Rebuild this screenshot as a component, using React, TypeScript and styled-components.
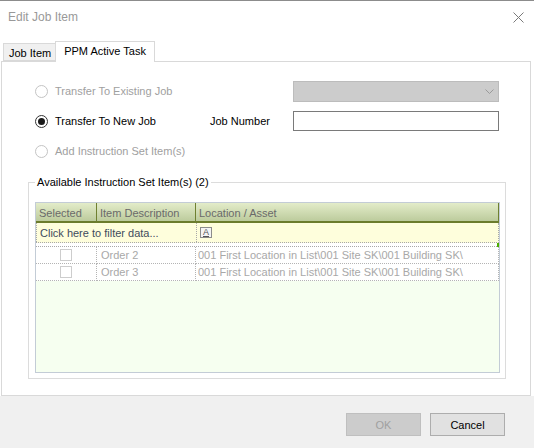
import React from "react";
import styled, { createGlobalStyle } from "styled-components";

const GlobalStyle = createGlobalStyle`
  html, body {
    margin: 0;
    padding: 0;
    background: #ffffff;
  }
  body {
    font-family: "Liberation Sans", Arial, sans-serif;
    font-size: 11px;
    color: #000000;
  }
`;

const Window = styled.div`
  width: 534px;
  height: 448px;
  box-sizing: border-box;
  border-top: 1px solid #8c8c8c;
  display: flex;
  flex-direction: column;
  background: #ffffff;
  overflow: hidden;
`;

const TitleBar = styled.div`
  height: 32px;
  display: flex;
  align-items: center;
  justify-content: space-between;
  padding: 0 10px 0 8px;
`;

const Title = styled.span`
  font-size: 12px;
  color: #999999;
`;

const CloseButton = styled.span`
  display: flex;
  width: 11px;
  height: 11px;
`;

const TabStrip = styled.div`
  height: 28px;
  display: flex;
  align-items: flex-end;
  padding-left: 3px;
`;

const Tab = styled.div<{ $active?: boolean }>`
  box-sizing: border-box;
  height: ${(p) => (p.$active ? "21px" : "18px")};
  padding: ${(p) => (p.$active ? "3px 8px 0 8px" : "3px 4px 0 5px")};
  margin-left: ${(p) => (p.$active ? "-1px" : "0")};
  margin-bottom: ${(p) => (p.$active ? "-1px" : "0")};
  position: relative;
  z-index: ${(p) => (p.$active ? 1 : 0)};
  border: 1px solid #d9d9d9;
  border-bottom: ${(p) => (p.$active ? "none" : "1px solid #d9d9d9")};
  background: ${(p) => (p.$active ? "#ffffff" : "#f0f0f0")};
  font-size: 11px;
  line-height: 13px;
  white-space: nowrap;
`;

const Panel = styled.div`
  box-sizing: border-box;
  margin-left: 1px;
  width: 530px;
  height: 335px;
  border: 1px solid #d9d9d9;
  background: #ffffff;
  display: flex;
  flex-direction: column;
`;

const Options = styled.div`
  display: grid;
  grid-template-columns: 175px 83px 206px;
  grid-auto-rows: 20px;
  row-gap: 10px;
  margin: 19px 0 0 33px;
  align-items: center;
`;

const RadioRow = styled.label<{ $disabled?: boolean }>`
  display: flex;
  align-items: center;
  gap: 7px;
  color: ${(p) => (p.$disabled ? "#a0a0a0" : "#000000")};
  white-space: nowrap;
`;

const RadioDot = styled.span<{ $checked?: boolean; $disabled?: boolean }>`
  box-sizing: border-box;
  width: 13px;
  height: 13px;
  border-radius: 50%;
  border: 1px solid ${(p) => (p.$disabled ? "#c4c4c4" : "#333333")};
  background: #ffffff;
  display: flex;
  align-items: center;
  justify-content: center;

  &::after {
    content: "";
    width: 7px;
    height: 7px;
    border-radius: 50%;
    background: ${(p) => (p.$checked ? "#1a1a1a" : "transparent")};
  }
`;

const FieldLabel = styled.span`
  color: #000000;
`;

const Combo = styled.div`
  box-sizing: border-box;
  height: 21px;
  border: 1px solid #bcbcbc;
  background: #cccccc;
  display: flex;
  align-items: center;
  justify-content: flex-end;
  padding-right: 4px;
`;

const TextBox = styled.input`
  box-sizing: border-box;
  height: 20px;
  width: 206px;
  margin: 0;
  border: 1px solid #7a7a7a;
  background: #ffffff;
  outline: none;
`;

const Group = styled.fieldset`
  box-sizing: border-box;
  margin: 15px 0 0 26px;
  width: 478px;
  height: 203px;
  padding: 0 5px 5px 6px;
  border: 1px solid #dcdcdc;
`;

const GroupTitle = styled.legend`
  padding: 0 2px;
  font-size: 11px;
  line-height: 13px;
  color: #000000;
`;

const Grid = styled.div`
  box-sizing: border-box;
  margin-top: 13px;
  height: 171px;
  border: 1px solid #c3ccd6;
  background: #f6fff0;
  display: flex;
  flex-direction: column;
`;

const GridRow = styled.div`
  display: grid;
  grid-template-columns: 61px 99px 1fr;
`;

const HeaderCell = styled.div`
  box-sizing: border-box;
  height: 20px;
  padding: 3px 0 0 3px;
  border-right: 1px solid #6f8030;
  border-bottom: 2px solid #6b7c2c;
  background: linear-gradient(#e3ecc9, #bccb9c);
  color: #6a6a6a;
  line-height: 14px;
  white-space: nowrap;
`;

const FilterRow = styled.div`
  display: grid;
  grid-template-columns: 160px 1fr;
  height: 19px;
  background: #fefedc;
  border-bottom: 1px dotted #a8a8a8;
  border-right: 1px dotted #a8a8a8;
`;

const FilterCell = styled.div`
  display: flex;
  align-items: center;
  padding-left: 3px;
  border-left: 1px dotted #a8a8a8;
  color: #3e4c5c;
  white-space: nowrap;
`;

const FilterIcon = styled.span`
  box-sizing: border-box;
  width: 12px;
  height: 11px;
  border: 1px solid #8c8c8c;
  background: #f4f4f4;
  font-size: 9px;
  line-height: 9px;
  text-align: center;
  text-decoration: underline;
  color: #555555;
`;

const Spacer = styled.div`
  height: 3px;
  background: #ffffff;
  border-bottom: 1px dotted #a8a8a8;
  display: flex;
  justify-content: flex-end;
`;

const Marker = styled.span`
  width: 2px;
  height: 4px;
  background: #4caf00;
`;

const Cell = styled.div<{ $center?: boolean; $pad?: number }>`
  box-sizing: border-box;
  height: 17px;
  display: flex;
  align-items: center;
  justify-content: ${(p) => (p.$center ? "center" : "flex-start")};
  padding-left: ${(p) => p.$pad ?? 0}px;
  background: #ffffff;
  border-right: 1px dotted #b4b4b4;
  border-bottom: 1px dotted #b4b4b4;
  color: #a8a8a8;
  white-space: nowrap;
  overflow: hidden;
`;

const CheckBox = styled.span`
  box-sizing: border-box;
  width: 12px;
  height: 12px;
  border: 1px solid #cdcdcd;
  background: #ffffff;
`;

const Footer = styled.div`
  flex: 1;
  background: #f0f0f0;
  display: flex;
  justify-content: flex-end;
  align-items: flex-start;
  gap: 9px;
  padding: 17px 29px 0 0;
`;

const Button = styled.button<{ $disabled?: boolean }>`
  box-sizing: border-box;
  width: 75px;
  height: 23px;
  margin: 0;
  padding: 0;
  font-family: "Liberation Sans", Arial, sans-serif;
  font-size: 11px;
  border: 1px solid ${(p) => (p.$disabled ? "#bfbfbf" : "#adadad")};
  background: ${(p) => (p.$disabled ? "#cccccc" : "#e1e1e1")};
  color: ${(p) => (p.$disabled ? "#a0a0a0" : "#000000")};
`;

const rows = [
  { name: "Order 2", location: "001 First Location in List\\001 Site SK\\001 Building SK\\" },
  { name: "Order 3", location: "001 First Location in List\\001 Site SK\\001 Building SK\\" },
];

export default function App() {
  return (
    <>
      <GlobalStyle />
      <Window>
        <TitleBar>
          <Title>Edit Job Item</Title>
          <CloseButton>
            <svg width="11" height="11" viewBox="0 0 11 11">
              <path d="M0.5 0.5 L10.5 10.5 M10.5 0.5 L0.5 10.5" stroke="#7a7a7a" strokeWidth="1" />
            </svg>
          </CloseButton>
        </TitleBar>

        <TabStrip>
          <Tab>Job Item</Tab>
          <Tab $active>PPM Active Task</Tab>
        </TabStrip>

        <Panel>
          <Options>
            <RadioRow $disabled>
              <RadioDot $disabled />
              Transfer To Existing Job
            </RadioRow>
            <span />
            <Combo>
              <svg width="9" height="5" viewBox="0 0 9 5">
                <polyline points="0.5,0.5 4.5,4.5 8.5,0.5" fill="none" stroke="#9a9a9a" strokeWidth="1" />
              </svg>
            </Combo>

            <RadioRow>
              <RadioDot $checked />
              Transfer To New Job
            </RadioRow>
            <FieldLabel>Job Number</FieldLabel>
            <TextBox />

            <RadioRow $disabled>
              <RadioDot $disabled />
              Add Instruction Set Item(s)
            </RadioRow>
          </Options>

          <Group>
            <GroupTitle>Available Instruction Set Item(s) (2)</GroupTitle>
            <Grid>
              <GridRow>
                <HeaderCell>Selected</HeaderCell>
                <HeaderCell>Item Description</HeaderCell>
                <HeaderCell>Location / Asset</HeaderCell>
              </GridRow>
              <FilterRow>
                <FilterCell>Click here to filter data...</FilterCell>
                <FilterCell>
                  <FilterIcon>A</FilterIcon>
                </FilterCell>
              </FilterRow>
              <Spacer>
                <Marker />
              </Spacer>
              {rows.map((r) => (
                <GridRow key={r.name}>
                  <Cell $center>
                    <CheckBox />
                  </Cell>
                  <Cell $pad={4}>{r.name}</Cell>
                  <Cell $pad={2}>{r.location}</Cell>
                </GridRow>
              ))}
            </Grid>
          </Group>
        </Panel>

        <Footer>
          <Button $disabled>OK</Button>
          <Button>Cancel</Button>
        </Footer>
      </Window>
    </>
  );
}
